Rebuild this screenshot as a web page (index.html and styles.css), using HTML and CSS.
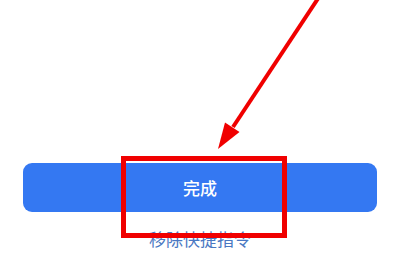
FILE: index.html
```html
<!DOCTYPE html>
<html lang="zh-CN">
<head>
  <meta charset="UTF-8" />
  <title>完成</title>
  <link rel="stylesheet" href="styles.css">
</head>
<body>
  <div class="screen">
    <button class="done-button">完成</button>
    <a class="remove-link">移除快捷指令</a>

    <!-- annotation overlay -->
    <svg class="arrow" width="400" height="256" viewBox="0 0 400 256">
      <line x1="319" y1="-3" x2="233" y2="127" stroke="#f00000" stroke-width="4" />
      <polygon points="218,149 239.5,132 225,122.5" fill="#f00000" />
    </svg>
    <div class="highlight"></div>
  </div>
</body>
</html>
```

FILE: styles.css
```css
body {
  margin: 0;
  background: #fff;
  font-family: "Noto Sans CJK SC", "Noto Sans", sans-serif;
}
.screen {
  position: relative;
  width: 400px;
  height: 256px;
  overflow: hidden;
  display: flex;
  flex-direction: column;
  align-items: center;
  padding-top: 163px;
  box-sizing: border-box;
}
.done-button {
  width: 354px;
  height: 49px;
  border: none;
  border-radius: 9px;
  background: #3478f2;
  color: #fff;
  font-family: inherit;
  font-size: 17px;
  font-weight: 500;
  padding: 0;
}
.remove-link {
  margin-top: 15px;
  font-size: 17px;
  line-height: 24px;
  color: #4a78c2;
}
.arrow {
  position: absolute;
  left: 0;
  top: 0;
}
.highlight {
  position: absolute;
  left: 121px;
  top: 156px;
  width: 156px;
  height: 72px;
  border: 5px solid #f00000;
}
```
